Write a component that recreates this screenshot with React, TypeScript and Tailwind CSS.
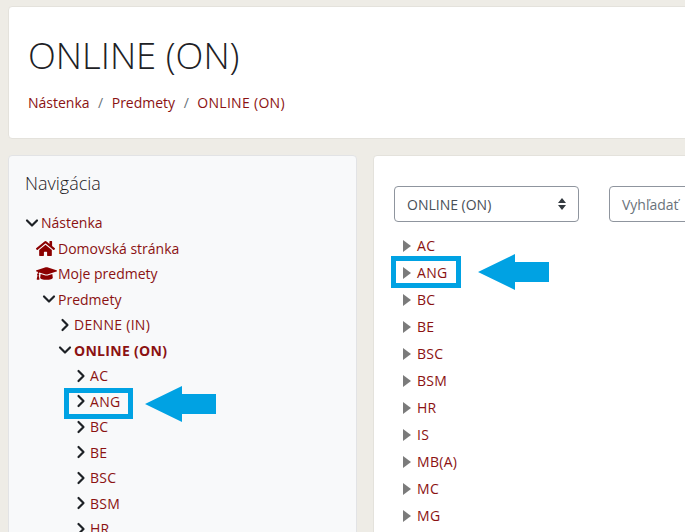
import { ChevronDown, ChevronRight } from "lucide-react";
import { FaGraduationCap, FaHome } from "react-icons/fa";

const link = "text-[#8b1212]";
const sidebarCourses = ["BC", "BE", "BSC", "BSM", "HR"];
const mainCourses = ["BC", "BE", "BSC", "BSM", "HR", "IS", "MB(A)", "MC", "MG"];

function Arrow({ className }: { className: string }) {
  return (
    <svg className={className} width="72" height="36" viewBox="0 0 72 36">
      <path d="M0 18 L37 0 L37 8 L71 8 L71 28 L37 28 L37 36 Z" fill="#00a2e3" />
    </svg>
  );
}

function Chevron({ open = false }: { open?: boolean }) {
  const Icon = open ? ChevronDown : ChevronRight;
  return <Icon className="ml-[-3px] mr-[-2px] h-[20px] w-[20px] shrink-0 text-[#1d2125]" strokeWidth={2.6} />;
}

function NavRow({ label, indent, open, bold }: { label: string; indent: string; open?: boolean; bold?: boolean }) {
  const upper = label === label.toUpperCase();
  return (
    <div className={`flex h-[25.5px] items-center gap-[1px] ${indent}`}>
      <Chevron open={open} />
      <span className={`${link} ${bold ? "font-bold" : ""} ${upper ? "tracking-[0.3px]" : ""}`}>{label}</span>
    </div>
  );
}

function CourseRow({ label }: { label: string }) {
  return (
    <div className="flex h-[27px] items-center gap-[6px] pl-[9px]">
      <span className="h-0 w-0 border-y-[6px] border-l-[8px] border-y-transparent border-l-[#7b7b7b]" />
      <span className={`${link} tracking-[0.3px]`}>{label}</span>
    </div>
  );
}

export default function App() {
  return (
    <div className="h-[532px] w-[685px] overflow-hidden bg-[#eeece6] pl-2 pt-[6px] font-['Open_Sans','Liberation_Sans',sans-serif] text-[14px] text-[#1d2125]">
      <header className="flex h-[133px] w-[800px] flex-col rounded-[4px] border border-[#e4e2dc] bg-white pl-[19px] pt-[26px]">
        <h1 className="text-[36.4px] leading-[44px] font-light">ONLINE (ON)</h1>
        <nav className="mt-[15px] flex items-center gap-[8.5px]">
          <span className={link}>Nástenka</span>
          <span className="text-[#6a737b]">/</span>
          <span className={link}>Predmety</span>
          <span className="text-[#6a737b]">/</span>
          <span className={`${link} tracking-[0.3px]`}>ONLINE (ON)</span>
        </nav>
      </header>

      <div className="mt-[16px] flex gap-[16px]">
        <aside className="h-[400px] w-[349px] shrink-0 rounded-[4px] border border-[#e2e3e5] bg-[#f8f9fa] pl-[16px] pt-[15px]">
          <h2 className="text-[18px] leading-[24px] font-light">Navigácia</h2>
          <div className="mt-[15px]">
            <NavRow label="Nástenka" indent="pl-0" open />
            <div className="flex h-[25.5px] items-center gap-[3px] pl-[11px]">
              <FaHome className="h-[17px] w-[19px] shrink-0 text-[#8b0000]" />
              <span className={link}>Domovská stránka</span>
            </div>
            <div className="flex h-[25.5px] items-center gap-[1px] pl-[11px]">
              <FaGraduationCap className="h-[19px] w-[21px] shrink-0 text-[#8b0000]" />
              <span className={link}>Moje predmety</span>
            </div>
            <NavRow label="Predmety" indent="pl-[17px]" open />
            <NavRow label="DENNE (IN)" indent="pl-[33px]" />
            <NavRow label="ONLINE (ON)" indent="pl-[33px]" open bold />
            <NavRow label="AC" indent="pl-[49px]" />
            <div className="relative">
              <NavRow label="ANG" indent="pl-[49px]" />
              <div className="absolute top-[-1px] left-[39px] h-[31px] w-[69px] border-[5px] border-[#00a2e3]" />
              <Arrow className="absolute top-[-3px] left-[120px]" />
            </div>
            {sidebarCourses.map((course) => (
              <NavRow key={course} label={course} indent="pl-[49px]" />
            ))}
          </div>
        </aside>

        <main className="h-[400px] w-[400px] shrink-0 rounded-[4px] border border-[#e4e2dc] bg-white pl-[20px] pt-[30px]">
          <div className="flex gap-[30px]">
            <div className="flex h-[36px] w-[185px] shrink-0 items-center justify-between rounded-[4px] border border-[#8f959e] pl-[12px] pr-[12px] text-[#495057]">
              <span>ONLINE (ON)</span>
              <svg width="8" height="12" viewBox="0 0 8 12">
                <path d="M4 0 L8 5 L0 5 Z M4 12 L0 7 L8 7 Z" fill="#343a40" />
              </svg>
            </div>
            <div className="flex h-[36px] w-[200px] shrink-0 items-center rounded-[4px] border border-[#8f959e] pl-[12px] text-[#6a737b]">Vyhľadať</div>
          </div>
          <div className="mt-[10px]">
            <CourseRow label="AC" />
            <div className="relative">
              <CourseRow label="ANG" />
              <div className="absolute top-[-3px] left-[-3px] h-[32px] w-[70px] border-[5px] border-[#00a2e3]" />
              <Arrow className="absolute top-[-5px] left-[84px]" />
            </div>
            {mainCourses.map((course) => (
              <CourseRow key={course} label={course} />
            ))}
          </div>
        </main>
      </div>
    </div>
  );
}
